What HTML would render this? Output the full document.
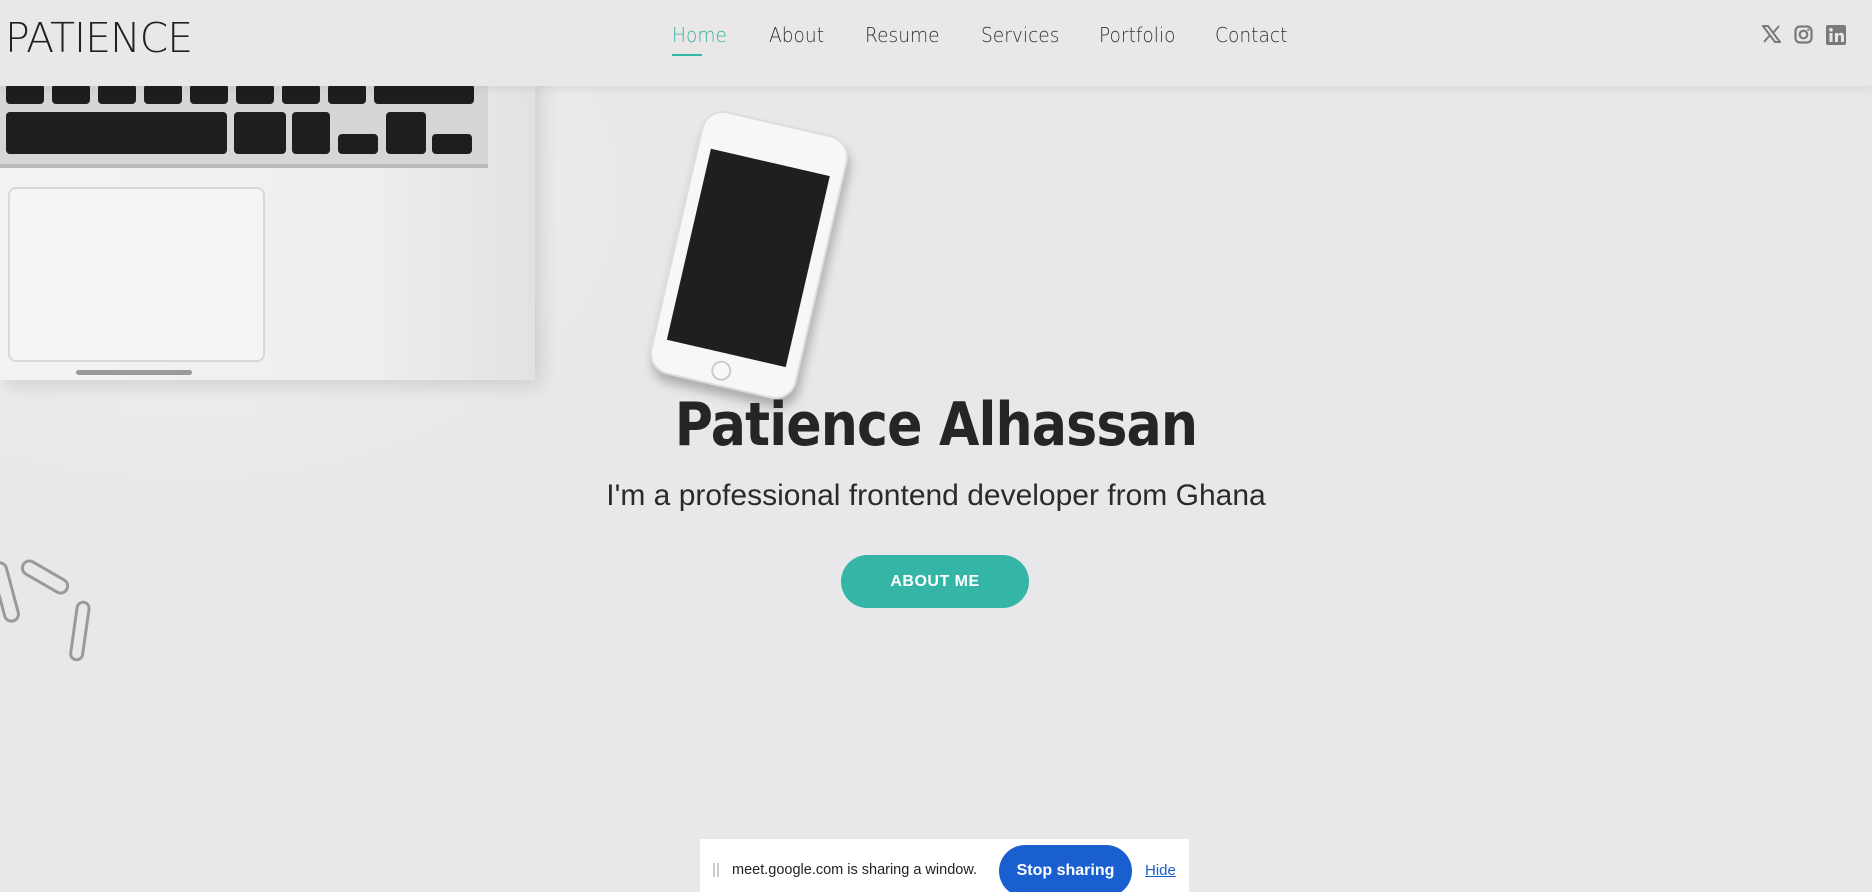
<!DOCTYPE html>
<html><head><meta charset="utf-8">
<style>
*{margin:0;padding:0;box-sizing:border-box}
html,body{width:1872px;height:892px;overflow:hidden}
body{background:#e8e8ea;font-family:"Liberation Sans",sans-serif;position:relative}
.bgl{position:absolute;left:0;top:0;width:620px;height:480px;background:radial-gradient(ellipse at 30% 40%,#f2f2f2 0%,#ececec 50%,rgba(232,232,234,0) 80%)}
.laptop{position:absolute;left:0;top:70px;width:535px;height:310px;background:linear-gradient(90deg,#f3f3f3,#eeeeee 70%,#e2e2e2);box-shadow:6px 6px 18px rgba(0,0,0,.12)}
.well{position:absolute;left:0;top:0;width:488px;height:98px;background:#d6d6d6;border-bottom:4px solid #b9b9b9}
.key{position:absolute;background:#1e1e1e;border-radius:4px}
.pad{position:absolute;left:8px;top:117px;width:257px;height:175px;border:2px solid #d8d8d8;border-radius:8px;background:#f5f5f5}
.notch{position:absolute;left:76px;top:300px;width:116px;height:5px;background:#9a9a9a;border-radius:3px}
.phone{position:absolute;left:674px;top:120px;width:150px;height:270px;background:#f7f7f7;border-radius:22px;transform:rotate(13deg);box-shadow:4px 8px 10px rgba(0,0,0,.25);border:2px solid #ddd}
.scr{position:absolute;left:12px;top:38px;width:122px;height:196px;background:#1f1f1f}
.hb{position:absolute;left:62px;top:242px;width:20px;height:20px;border:2px solid #ccc;border-radius:50%}
header{position:absolute;left:0;top:0;width:1872px;height:86px;background:#e9e8e6;box-shadow:0 2px 10px rgba(0,0,0,.08)}
.logo{position:absolute;left:5px;top:14px;font-size:41px;color:#222;letter-spacing:-1px;font-family:"DejaVu Sans","Liberation Sans",sans-serif;font-weight:200}
nav a{position:absolute;top:23px;font-size:20px;color:#333;text-decoration:none;font-family:"DejaVu Sans",sans-serif;font-weight:300;transform:scaleX(.93);transform-origin:left}
nav a.on{color:#35b5a6}
.ul{position:absolute;left:672px;top:54px;width:30px;height:2px;background:#35b5a6}
.ic{position:absolute;top:25px}
h1{position:absolute;left:0;width:1872px;text-align:center;top:390px;font-size:60px;font-weight:bold;color:#252525;font-family:"DejaVu Sans",sans-serif;letter-spacing:-1px;transform:scaleX(.87)}
.sub{position:absolute;left:0;width:1872px;text-align:center;top:479px;font-size:30px;color:#2a2a2a}
.btn{position:absolute;left:841px;top:555px;width:188px;height:53px;border-radius:27px;background:#35b5a6;color:#fff;font-weight:bold;font-size:16px;text-align:center;line-height:53px;letter-spacing:.5px}
.bar{position:absolute;left:700px;top:839px;width:489px;height:60px;background:#fff}
.bar .t{position:absolute;left:32px;top:23px;font-size:14.5px;color:#222;white-space:nowrap}
.bar .g{position:absolute;left:13px;top:24px;width:6px;height:14px;border-left:2px solid #ccc;border-right:2px solid #ccc}
.bar .s{position:absolute;left:299px;top:6px;width:133px;height:52px;background:#1a5fd0;border-radius:26px;color:#fff;font-weight:bold;font-size:16px;text-align:center;line-height:52px}
.bar .h{position:absolute;left:445px;top:23px;font-size:15px;color:#1a5fd0;text-decoration:underline}
</style></head><body>
<div class="bgl"></div>
<div class="laptop">
 <div class="well">
  <div class="key" style="left:6px;top:14px;width:38px;height:20px"></div>
  <div class="key" style="left:52px;top:14px;width:38px;height:20px"></div>
  <div class="key" style="left:98px;top:14px;width:38px;height:20px"></div>
  <div class="key" style="left:144px;top:14px;width:38px;height:20px"></div>
  <div class="key" style="left:190px;top:14px;width:38px;height:20px"></div>
  <div class="key" style="left:236px;top:14px;width:38px;height:20px"></div>
  <div class="key" style="left:282px;top:14px;width:38px;height:20px"></div>
  <div class="key" style="left:328px;top:14px;width:38px;height:20px"></div>
  <div class="key" style="left:374px;top:14px;width:100px;height:20px"></div>
  <div class="key" style="left:6px;top:42px;width:221px;height:42px"></div>
  <div class="key" style="left:234px;top:42px;width:52px;height:42px"></div>
  <div class="key" style="left:292px;top:42px;width:38px;height:42px"></div>
  <div class="key" style="left:338px;top:64px;width:40px;height:20px"></div>
  <div class="key" style="left:386px;top:42px;width:40px;height:42px"></div>
  <div class="key" style="left:432px;top:64px;width:40px;height:20px"></div>
 </div>
 <div class="pad"></div>
 <div class="notch"></div>
</div>
<div class="phone"><div class="scr"></div><div class="hb"></div></div>
<svg style="position:absolute;left:0;top:540px" width="100" height="200" fill="none" stroke="#9a9a9a" stroke-width="3">
 <rect x="38" y="12" width="14" height="50" rx="7" transform="rotate(-60 45 37)"/>
 <rect x="74" y="62" width="12" height="58" rx="6" transform="rotate(8 80 90)"/>
 <rect x="-2" y="22" width="14" height="60" rx="7" transform="rotate(-15 5 50)"/>
</svg>
<header>
 <div class="logo">PATIENCE</div>
 <nav>
  <a class="on" style="left:672px">Home</a>
  <a style="left:769px">About</a>
  <a style="left:865px">Resume</a>
  <a style="left:981px">Services</a>
  <a style="left:1099px">Portfolio</a>
  <a style="left:1215px">Contact</a>
 </nav>
 <div class="ul"></div>
 <svg class="ic" style="left:1762px" width="19" height="18" viewBox="0 0 19 18"><path d="M1 1h5l12 16h-5z" fill="none" stroke="#7a7a7a" stroke-width="2"/><path d="M17 1L11 8M2 17l6-7" stroke="#7a7a7a" stroke-width="2"/></svg>
 <svg class="ic" style="left:1794px" width="19" height="19" viewBox="0 0 19 19"><rect x="1.5" y="1.5" width="16" height="16" rx="4.5" fill="none" stroke="#7a7a7a" stroke-width="2.2"/><circle cx="9.5" cy="9.5" r="3.8" fill="none" stroke="#7a7a7a" stroke-width="2.2"/><circle cx="14.3" cy="4.8" r="1.2" fill="#7a7a7a"/></svg>
 <svg class="ic" style="left:1826px" width="20" height="20" viewBox="0 0 20 20"><rect width="20" height="20" rx="2" fill="#7a7a7a"/><rect x="3.5" y="8" width="3" height="9" fill="#e9e8e6"/><circle cx="5" cy="4.8" r="1.8" fill="#e9e8e6"/><path d="M9 8h3v1.5c.8-1.2 2-1.8 3.2-1.8 2 0 2.8 1.4 2.8 3.6V17h-3v-5c0-1.2-.4-1.9-1.4-1.9S12 10.9 12 12v5H9z" fill="#e9e8e6"/></svg>
</header>
<h1>Patience Alhassan</h1>
<div class="sub">I'm a professional frontend developer from Ghana</div>
<div class="btn">ABOUT ME</div>
<div class="bar"><div class="g"></div><div class="t">meet.google.com is sharing a window.</div><div class="s">Stop sharing</div><div class="h">Hide</div></div>
</body></html>
